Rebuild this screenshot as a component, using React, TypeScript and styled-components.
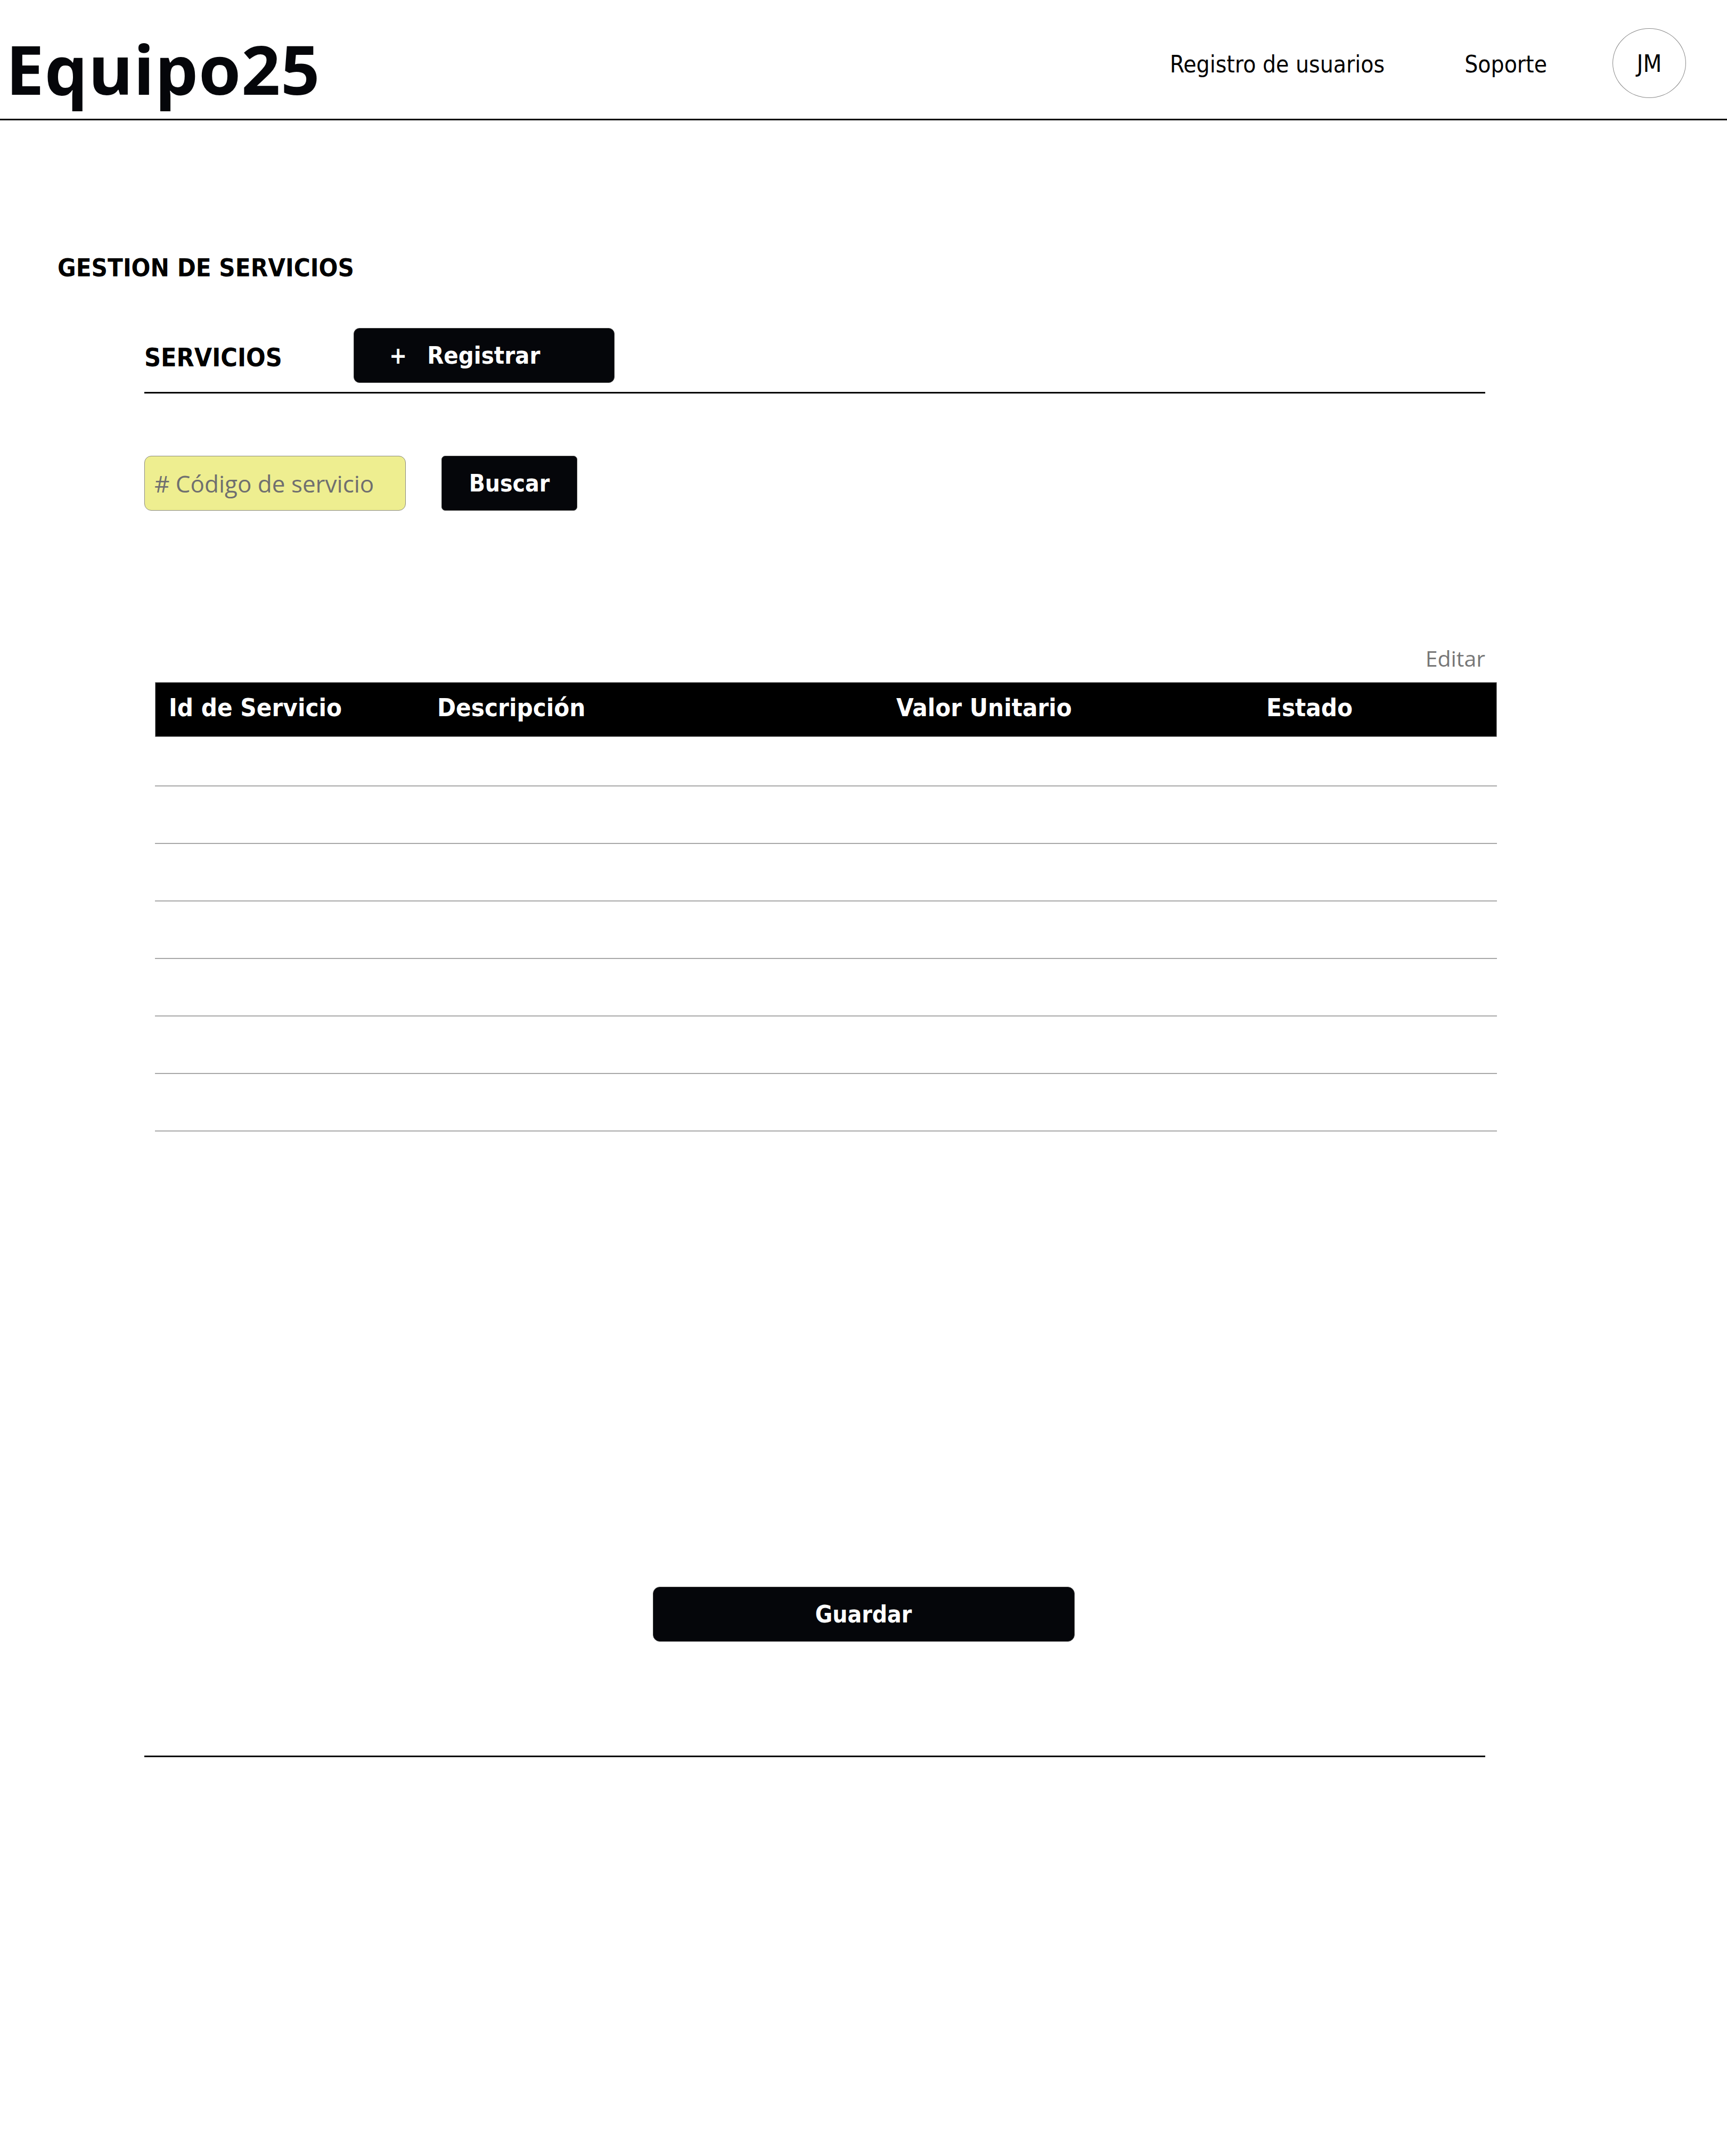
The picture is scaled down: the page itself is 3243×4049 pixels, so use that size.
import React from "react";
import styled, { createGlobalStyle } from "styled-components";

const TAHOMA = `"DejaVu Sans Condensed", "DejaVu Sans", sans-serif`;
const SEGOE = `"Open Sans", "Noto Sans", sans-serif`;
const INK = "#05060a";

const GlobalStyle = createGlobalStyle`
  html, body {
    margin: 0;
    padding: 0;
    background: #ffffff;
  }
  body {
    width: 3243px;
    min-height: 4049px;
    color: ${INK};
  }
  * { box-sizing: border-box; }
`;

const Page = styled.div`
  width: 3243px;
  display: flex;
  flex-direction: column;
`;

/* ---------- header ---------- */
const Header = styled.header`
  height: 226px;
  border-bottom: 3px solid #000;
  display: flex;
  align-items: flex-start;
  justify-content: space-between;
  padding: 0 77px 0 11px;
`;

const Logo = styled.h1`
  margin: 65px 0 0 0;
  font-family: ${SEGOE};
  font-weight: 700;
  font-size: 128px;
  line-height: 1;
  letter-spacing: 1px;
  color: ${INK};
`;

const Nav = styled.nav`
  margin-top: 53px;
  height: 131px;
  display: flex;
  align-items: center;
`;

const NavLink = styled.a<{ $space: number }>`
  font-family: ${TAHOMA};
  font-stretch: semi-condensed;
  font-size: 44px;
  line-height: 1;
  color: #000;
  text-decoration: none;
  margin-right: ${(p) => p.$space}px;
  padding-top: 4px;
`;

const Avatar = styled.div`
  width: 138px;
  height: 131px;
  border: 1.5px solid #8a8a8a;
  border-radius: 50%;
  display: flex;
  align-items: center;
  justify-content: center;
  font-family: ${TAHOMA};
  font-stretch: semi-condensed;
  font-size: 45px;
  line-height: 1;
  color: #000;
  padding-top: 2px;
`;

/* ---------- main ---------- */
const Main = styled.main`
  display: flex;
  flex-direction: column;
  padding-left: 108px;
`;

const PageTitle = styled.h2`
  margin: 253px 0 0 0;
  font-family: ${TAHOMA};
  font-stretch: semi-condensed;
  font-weight: 700;
  font-size: 47px;
  line-height: 1;
  color: #000;
`;

const Section = styled.section`
  margin-left: 163px;
  width: 2540px;
  display: flex;
  flex-direction: column;
`;

const Toolbar = styled.div`
  margin-top: 90px;
  height: 103px;
  display: flex;
  align-items: center;
`;

const SectionLabel = styled.span`
  width: 393px;
  font-family: ${TAHOMA};
  font-stretch: semi-condensed;
  font-weight: 700;
  font-size: 48px;
  line-height: 1;
  color: #000;
  padding-top: 6px;
`;

const DarkButton = styled.button<{ $w: number; $radius: number }>`
  width: ${(p) => p.$w}px;
  height: 103px;
  border: 1px solid #3a3a3a;
  border-radius: ${(p) => p.$radius}px;
  background: ${INK};
  color: #fff;
  font-family: ${TAHOMA};
  font-stretch: semi-condensed;
  font-weight: 700;
  font-size: 44px;
  line-height: 1;
  display: flex;
  align-items: center;
  justify-content: center;
  gap: 38px;
  padding: 0;
  cursor: pointer;
`;

const RegisterButton = styled(DarkButton)`
  justify-content: flex-start;
  padding-left: 66px;
  font-size: 45px;
`;

const Plus = styled.span`
  font-size: 44px;
  font-weight: 700;
`;

const Rule = styled.div<{ $top: number }>`
  margin-top: ${(p) => p.$top}px;
  width: 2518px;
  height: 3px;
  background: #000;
`;

const SearchRow = styled.div`
  margin-top: 117px;
  display: flex;
  align-items: center;
  gap: 67px;
`;

const CodeInput = styled.input`
  width: 491px;
  height: 103px;
  background: #eeee90;
  border: 1.5px solid #8a8a80;
  border-radius: 13px;
  padding: 0 0 0 18px;
  font-family: ${SEGOE};
  font-size: 44px;
  color: #333;
  outline: none;
  &::placeholder {
    color: #6f6f6f;
  }
`;

const EditLink = styled.a`
  margin-top: 257px;
  width: 2518px;
  text-align: right;
  font-family: ${SEGOE};
  font-size: 41px;
  line-height: 1;
  color: #777;
  text-decoration: none;
`;

const Table = styled.div`
  margin: 24px 0 0 20px;
  width: 2520px;
  display: flex;
  flex-direction: column;
`;

const HeadRow = styled.div`
  height: 103px;
  background: #000;
  border: 1.5px solid #9a9a9a;
  display: grid;
  grid-template-columns: 504px 862px 695px 1fr;
  align-items: center;
  padding-left: 25px;
`;

const HeadCell = styled.div`
  font-family: ${TAHOMA};
  font-stretch: semi-condensed;
  font-weight: 700;
  font-size: 47px;
  line-height: 1;
  color: #fff;
  padding-bottom: 8px;
`;

const BodyRow = styled.div<{ $h: number }>`
  height: ${(p) => p.$h}px;
  border-bottom: 2px solid #a8a8a8;
  display: grid;
  grid-template-columns: 504px 862px 695px 1fr;
`;

const Footer = styled.div`
  margin-top: 855px;
  display: flex;
  justify-content: center;
  width: 3243px;
  margin-left: -108px;
`;

export default function App() {
  const rows = [93, 108, 108, 108, 108, 108, 108];
  return (
    <Page>
      <GlobalStyle />
      <Header>
        <Logo>Equipo25</Logo>
        <Nav>
          <NavLink href="#" $space={150}>
            Registro de usuarios
          </NavLink>
          <NavLink href="#" $space={123}>
            Soporte
          </NavLink>
          <Avatar>JM</Avatar>
        </Nav>
      </Header>

      <Main>
        <PageTitle>GESTION DE SERVICIOS</PageTitle>
        <Section>
          <Toolbar>
            <SectionLabel>SERVICIOS</SectionLabel>
            <RegisterButton $w={490} $radius={11}>
              <Plus>+</Plus>
              <span>Registrar</span>
            </RegisterButton>
          </Toolbar>
          <Rule $top={17} />

          <SearchRow>
            <CodeInput placeholder="# Código de servicio" />
            <DarkButton $w={255} $radius={7}>
              Buscar
            </DarkButton>
          </SearchRow>

          <EditLink href="#">Editar</EditLink>

          <Table>
            <HeadRow>
              <HeadCell>Id de Servicio</HeadCell>
              <HeadCell>Descripción</HeadCell>
              <HeadCell>Valor Unitario</HeadCell>
              <HeadCell>Estado</HeadCell>
            </HeadRow>
            {rows.map((h, i) => (
              <BodyRow key={i} $h={h} />
            ))}
          </Table>
        </Section>

        <Footer>
          <DarkButton $w={792} $radius={13}>
            Guardar
          </DarkButton>
        </Footer>

        <Section>
          <Rule $top={214} />
        </Section>
      </Main>
    </Page>
  );
}
